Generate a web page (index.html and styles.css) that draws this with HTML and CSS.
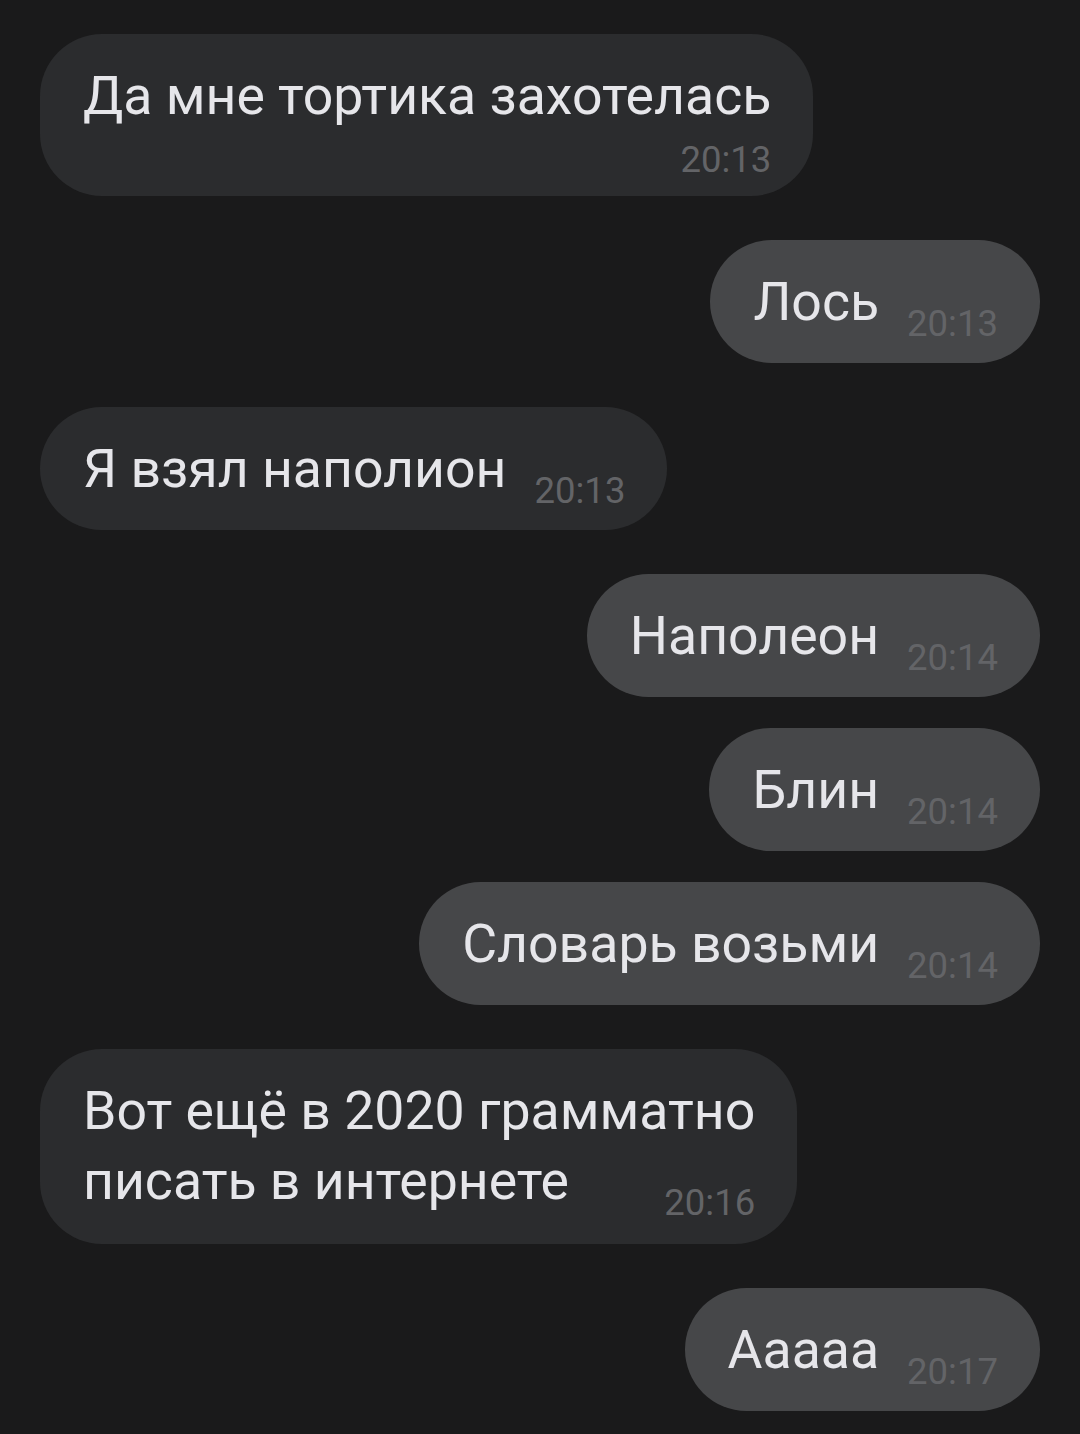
FILE: index.html
```html
<!DOCTYPE html>
<html lang="ru">

<head>
    <meta charset="UTF-8">
    <meta name="viewport" content="width=device-width, initial-scale=1.0">
    <title>Чат</title>
    <link rel="stylesheet" href="styles.css">
</head>

<body>
    <div class="chat">
        <div class="bubble in stacked">
            <span class="text">Да мне тортика захотелась</span>
            <span class="time">20:13</span>
        </div>

        <div class="bubble out">
            <span class="text">Лось</span>
            <span class="time">20:13</span>
        </div>

        <div class="bubble in">
            <span class="text">Я взял наполион</span>
            <span class="time">20:13</span>
        </div>

        <div class="bubble out">
            <span class="text">Наполеон</span>
            <span class="time">20:14</span>
        </div>
        <div class="bubble out same">
            <span class="text">Блин</span>
            <span class="time">20:14</span>
        </div>
        <div class="bubble out same">
            <span class="text">Словарь возьми</span>
            <span class="time">20:14</span>
        </div>

        <div class="bubble in multi">
            <span class="text">Вот ещё в 2020 грамматно</span>
            <div class="last-row">
                <span class="text">писать в интернете</span>
                <span class="time">20:16</span>
            </div>
        </div>

        <div class="bubble out">
            <span class="text">Ааааа</span>
            <span class="time">20:17</span>
        </div>
    </div>
</body>

</html>
```

FILE: styles.css
```css
body {
    margin: 0;
    background-color: #1a1a1b;
    font-family: Roboto, "Noto Sans", sans-serif;
}

.chat {
    display: flex;
    flex-direction: column;
    align-items: flex-start;
    gap: 44px;
    padding: 34px 40px;
}

.bubble {
    display: flex;
    align-items: flex-end;
    padding: 27px 42px 26px 43px;
    border-radius: 62px;
    color: #e6e6ea;
}

.in { background-color: #2b2c2e; }
.out {
    background-color: #464749;
    align-self: flex-end;
}

.same { margin-top: -13px; }

.text {
    font-size: 53.6px;
    line-height: 70px;
}

.time {
    font-size: 36.5px;
    line-height: 36px;
    margin-left: 28px;
    margin-bottom: -5px;
    color: #636467;
}

.stacked {
    flex-direction: column;
    padding-bottom: 23px;
}

.stacked .time {
    align-self: flex-end;
    margin-top: 11px;
    margin-left: 0;
}

.multi {
    flex-direction: column;
    align-items: stretch;
    padding-bottom: 28px;
}

.last-row {
    display: flex;
    justify-content: space-between;
    align-items: flex-end;
}
```
